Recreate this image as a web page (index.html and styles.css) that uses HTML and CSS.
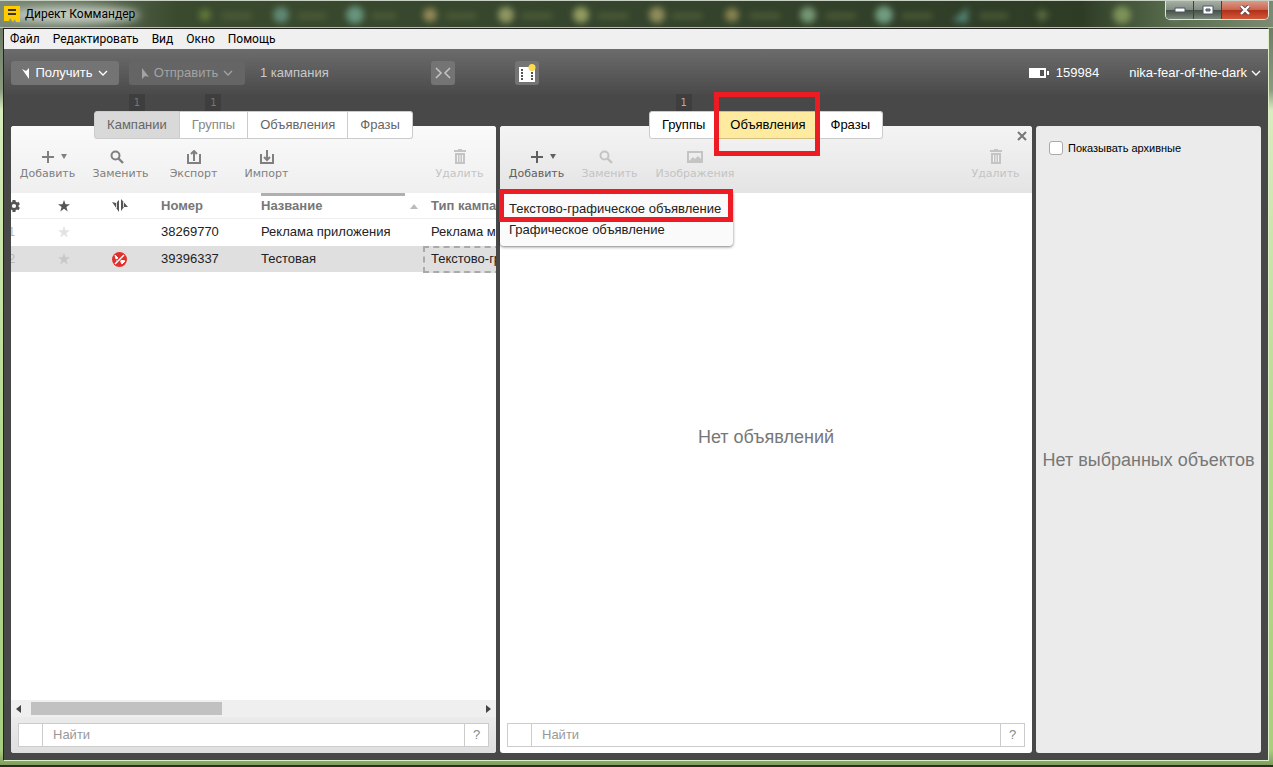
FILE: index.html
```
<!DOCTYPE html>
<html lang="ru">
  <head>
    <meta charset="UTF-8" />
    <meta name="viewport" content="width=device-width, initial-scale=1.0" />
    <title>Директ Коммандер</title>
    <link rel="stylesheet" href="styles.css">
  </head>
  <body>
    <!-- shared icons -->
    <svg class="sprite" aria-hidden="true">
      <symbol id="plus" viewBox="0 0 14 14"><path d="M7 1v12M1 7h12" fill="none" stroke="currentColor" stroke-width="2" /></symbol>
      <symbol id="search" viewBox="0 0 14 14"><circle cx="5.500" cy="5.500" r="4" fill="none" stroke="currentColor" stroke-width="2" /><path d="M8.500 8.500l4.500 4.500" stroke="currentColor" stroke-width="2.400" /></symbol>
      <symbol id="trash" viewBox="0 0 12 15"><path d="M0 1h4V0h4v1h4v2H0zM1 4h10v11H1z" fill="currentColor" /><path d="M3.500 6v7M6 6v7M8.500 6v7" stroke="#f4f4f4" /></symbol>
      <symbol id="star" viewBox="0 0 12 12"><path d="M6 0l1.500 4.200H12L8.400 6.900 9.700 11.500 6 8.800 2.300 11.500 3.600 6.900 0 4.200h4.500z" fill="currentColor" /></symbol>
      <symbol id="chevron" viewBox="0 0 10 6"><path d="M1 1l4 4 4-4" fill="none" stroke="currentColor" stroke-width="1.300" /></symbol>
    </svg>

    <div class="window">
      <header class="titlebar">
        <svg class="glass" width="1273" height="28" aria-hidden="true">
          <defs>
            <filter id="soft" x="-50%" y="-50%" width="200%" height="200%"><feGaussianBlur stdDeviation="3" /></filter>
            <filter id="haze" x="-50%" y="-100%" width="200%" height="300%"><feGaussianBlur stdDeviation="5" /></filter>
          </defs>
          <ellipse cx="74" cy="14" rx="66" ry="9" fill="#c3cbc1" filter="url(#haze)" />
          <g filter="url(#soft)" opacity="0.9">
            <circle cx="205" cy="14" r="6" fill="#647e3e" />
            <circle cx="281" cy="14" r="8" fill="#658f7c" />
            <circle cx="355" cy="14" r="9" fill="#6d9c86" />
            <circle cx="430" cy="14" r="7" fill="#9d915b" />
            <circle cx="506" cy="14" r="8" fill="#9aa167" />
            <circle cx="581" cy="14" r="8" fill="#9da666" />
            <circle cx="657" cy="14" r="8" fill="#9a9560" />
            <circle cx="732" cy="14" r="7" fill="#928a54" />
            <circle cx="808" cy="14" r="8" fill="#7ea17c" />
            <circle cx="884" cy="14" r="9" fill="#78a68a" />
            <path d="M952 20l16-14v16z" fill="#56887b" />
            <path d="M1042 8v13M1036 14h13" stroke="#71834e" stroke-width="3" />
            <circle cx="1122" cy="14" r="9" fill="#839a5c" />
            <circle cx="1175" cy="12" r="6" fill="#7da29a" />
            <path d="M222 15h30M298 15h28M372 15h24M446 15h30M522 15h30M598 15h30M672 15h30M750 15h30M826 15h30M902 15h30M980 15h28" stroke="#53633a" stroke-width="5" />
          </g>
        </svg>
        <svg class="logo" width="16" height="16" viewBox="0 0 16 16" aria-hidden="true">
          <path d="M0 0h16v16h-4l-1-3-2 3-3-4-1 3H0z" fill="#fc0" />
          <path d="M4 4h8M4 8h8" stroke="#3a3316" stroke-width="2" />
        </svg>
        <h1>Директ Коммандер</h1>
        <div class="controls">
          <button type="button" aria-label="Свернуть"><svg width="12" height="6"><path d="M1 1h10v4H1z" fill="#fff" stroke="#4c5566" /></svg></button>
          <button type="button" aria-label="Развернуть"><svg width="12" height="10"><path d="M1 1h10v8H1z" fill="#fff" stroke="#4c5566" /><path d="M4 4h4v2H4z" fill="#828a87" stroke="#4c5566" /></svg></button>
          <button type="button" class="close" aria-label="Закрыть"><svg width="12" height="10"><path d="M2 1l8 8M10 1l-8 8" stroke="#5b4750" stroke-width="4" /><path d="M2 1l8 8M10 1l-8 8" stroke="#fff" stroke-width="2.400" /></svg></button>
        </div>
      </header>

      <div class="app">
        <nav class="menubar">
          <a href="#">Файл</a>
          <a href="#">Редактировать</a>
          <a href="#">Вид</a>
          <a href="#">Окно</a>
          <a href="#">Помощь</a>
        </nav>

        <div class="workspace">
          <div class="topbar">
            <div class="sync">
              <button type="button" class="btn get">
                <svg width="8" height="11"><path d="M0 1l4 2 3-3v11z" fill="currentColor" /></svg>
                Получить
                <svg width="10" height="6"><use href="#chevron" /></svg>
              </button>
              <button type="button" class="btn send" disabled>
                <svg width="8" height="11"><path d="M1 0l7 9-4-1-3 3z" fill="currentColor" /></svg>
                Отправить
                <svg width="10" height="6"><use href="#chevron" /></svg>
              </button>
              <span class="count">1 кампания</span>
              <button type="button" class="btn square collapse" aria-label="Свернуть панели">
                <svg width="16" height="12"><path d="M1 1l5 5-5 5M15 1l-5 5 5 5" fill="none" stroke="#c4c4c4" stroke-width="1.500" /></svg>
              </button>
            </div>
            <div class="account">
              <button type="button" class="btn square" aria-label="Видео">
                <svg width="18" height="18"><path d="M1 3h16v15H1z" fill="#fff" /><path d="M4 5v12M14 5v12" stroke="#555" stroke-width="2" stroke-dasharray="2 1" /><circle cx="14" cy="3.500" r="3.500" fill="#ffdb4d" /></svg>
              </button>
              <span class="points">
                <svg width="20" height="10"><path d="M0 0h17v10H0zM18 3h2v4h-2z" fill="#fff" /><path d="M11 2h4v6h-4z" fill="#555" /></svg>
                159984
              </span>
              <button type="button" class="user">nika-fear-of-the-dark <svg width="10" height="6"><use href="#chevron" /></svg></button>
            </div>
          </div>

          <main class="panels">
            <section class="panel campaigns">
              <div class="panel-head">
                <div class="tabs">
                  <button type="button" class="tab current">Кампании<span class="badge">1</span></button>
                  <button type="button" class="tab dim">Группы<span class="badge">1</span></button>
                  <button type="button" class="tab">Объявления</button>
                  <button type="button" class="tab">Фразы</button>
                </div>
                <div class="tools">
                  <button type="button" class="tool"><span class="icon"><svg width="14" height="14"><use href="#plus" /></svg><i class="caret"></i></span>Добавить</button>
                  <button type="button" class="tool replace"><span class="icon"><svg width="14" height="14"><use href="#search" /></svg></span>Заменить</button>
                  <button type="button" class="tool"><span class="icon"><svg width="14" height="14"><path d="M1 4v9h12V4M7 11V2M4 4l3-3 3 3" fill="none" stroke="currentColor" stroke-width="2" /></svg></span>Экспорт</button>
                  <button type="button" class="tool"><span class="icon"><svg width="14" height="14"><path d="M1 4v9h12V4M7 0v9M4 7l3 3 3-3" fill="none" stroke="currentColor" stroke-width="2" /></svg></span>Импорт</button>
                  <button type="button" class="tool remove" disabled><span class="icon"><svg width="12" height="15"><use href="#trash" /></svg></span>Удалить</button>
                </div>
              </div>

              <div class="grid-view">
                <table>
                  <colgroup>
                    <col class="col-num"><col class="col-star"><col class="col-state"><col class="col-id"><col class="col-name"><col class="col-type">
                  </colgroup>
                  <thead>
                    <tr>
                      <th class="num"><svg width="12" height="12" viewBox="-6 -6 12 12" role="img" aria-label="Настройки"><circle r="3.400" fill="none" stroke="currentColor" stroke-width="2.600" /><path d="M0-6v2M0 6v-2M-5.200-3l1.700 1M5.200 3l-1.700-1M-5.200 3l1.700-1M5.200-3l-1.700 1" stroke="currentColor" stroke-width="3" /></svg></th>
                      <th class="mark"><svg width="12" height="12" role="img" aria-label="Избранное"><use href="#star" /></svg></th>
                      <th class="mark"><svg width="16" height="13" role="img" aria-label="Статус"><path d="M0 3l4 1 3-3v12zM9 0l7 8h-4l-3 4z" fill="currentColor" /><path d="M4.500 3v6M11.500 3v5" stroke="#fff" stroke-width="0.800" /></svg></th>
                      <th>Номер</th>
                      <th class="sorted">Название</th>
                      <th>Тип кампании</th>
                    </tr>
                  </thead>
                  <tbody>
                    <tr>
                      <td class="num">1</td>
                      <td class="mark"><svg width="12" height="12"><use href="#star" /></svg></td>
                      <td class="mark"></td>
                      <td>38269770</td>
                      <td>Реклама приложения</td>
                      <td>Реклама мобильных приложений</td>
                    </tr>
                    <tr class="selected">
                      <td class="num">2</td>
                      <td class="mark"><svg width="12" height="12"><use href="#star" /></svg></td>
                      <td class="mark"><svg width="15" height="15"><circle cx="7.500" cy="7.500" r="7.500" fill="#e0312d" /><path d="M3 3l3 3-2 1zM8 8l5 1-3 3zM5 8l-1 3M11 4l-3 2" fill="#fff" stroke="#fff" /><path d="M12 2L3 13" stroke="#e0312d" stroke-width="3" /><path d="M12 3L3 12" stroke="#fff" stroke-width="1.500" /></svg></td>
                      <td>39396337</td>
                      <td>Тестовая</td>
                      <td class="focused">Текстово-графические объявления</td>
                    </tr>
                  </tbody>
                </table>
              </div>

              <div class="scrollbar">
                <i class="arrow left"></i>
                <div class="track"><div class="thumb"></div></div>
                <i class="arrow right"></i>
              </div>
              <form class="find">
                <span class="find-box"></span>
                <input type="text" placeholder="Найти" aria-label="Найти кампанию">
                <button type="button" aria-label="Справка">?</button>
              </form>
            </section>

            <section class="panel ads">
              <button type="button" class="panel-close" aria-label="Закрыть панель"><svg width="10" height="10"><path d="M1 1l8 8M9 1L1 9" stroke="#777" stroke-width="2" /></svg></button>
              <div class="panel-head">
                <div class="tabs">
                  <button type="button" class="tab">Группы<span class="badge">1</span></button>
                  <button type="button" class="tab active">Объявления<span class="frame"></span></button>
                  <button type="button" class="tab">Фразы</button>
                </div>
                <div class="tools">
                  <button type="button" class="tool open"><span class="icon"><svg width="14" height="14"><use href="#plus" /></svg><i class="caret"></i></span>Добавить</button>
                  <button type="button" class="tool replace" disabled><span class="icon"><svg width="14" height="14"><use href="#search" /></svg></span>Заменить</button>
                  <button type="button" class="tool wide" disabled><span class="icon"><svg width="16" height="12"><path d="M1 1h14v10H1z" fill="none" stroke="currentColor" stroke-width="2" /><path d="M2 10l4-4 2 2 3-3 3 3v2z" fill="currentColor" /></svg></span>Изображения</button>
                  <button type="button" class="tool remove" disabled><span class="icon"><svg width="12" height="15"><use href="#trash" /></svg></span>Удалить</button>
                </div>
                <div class="dropdown">
                  <button type="button">Текстово-графическое объявление<span class="frame"></span></button>
                  <button type="button">Графическое объявление</button>
                </div>
              </div>
              <p class="empty">Нет объявлений</p>
              <form class="find">
                <span class="find-box"></span>
                <input type="text" placeholder="Найти" aria-label="Найти объявление">
                <button type="button" aria-label="Справка">?</button>
              </form>
            </section>

            <aside class="panel details">
              <label class="archive" for="archived"><input type="checkbox" id="archived"> Показывать архивные</label>
              <p class="empty">Нет выбранных объектов</p>
            </aside>
          </main>
        </div>
      </div>
    </div>
  </body>
</html>
```
FILE: styles.css
```
* {
  box-sizing: border-box;
}

body {
  margin: 0;
  font-family: "Liberation Sans", Arial, sans-serif;
  font-size: 13px;
  line-height: 16px;
  color: #222;
}

button {
  margin: 0;
  padding: 0;
  border: none;
  background: none;
  font: inherit;
  color: inherit;
}

svg {
  display: block;
  flex: none;
}

.sprite {
  position: absolute;
  width: 0;
  height: 0;
}

/* window frame */
.window {
  display: flex;
  flex-direction: column;
  min-height: 100vh;
  padding: 0 4px 4px 3px;
  background: linear-gradient(#6d7c68 28px, #8b9b80 90px, #d7edbd 110px, #b5d98e 60%, #a8cf80 98%, #7f9d5e);
  border-bottom: 2px solid #26301c;
}

.titlebar {
  position: relative;
  display: flex;
  align-items: center;
  height: 28px;
  margin: 0 -4px 0 -3px;
  padding-left: 4px;
  border-top: 1px solid #c8d0c4;
  border-bottom: 1px solid #b5bfae;
  background: linear-gradient(90deg, #7c8a77, #3a4a2e 14%, #35452d 50%, #2e3c26 85%, #586c4d 92%, #7b8b72);
  overflow: hidden;
}

.glass {
  position: absolute;
  left: 0;
  top: 0;
}

.logo,
.titlebar h1 {
  position: relative;
}

.titlebar h1 {
  margin: 0 0 0 5px;
  font: 12px/16px Roboto, sans-serif;
  color: #000;
}

.controls {
  position: relative;
  display: flex;
  align-self: flex-start;
  margin-left: auto;
  margin-right: 4px;
  border: 1px solid #dfe4dd;
  border-top: none;
  border-radius: 0 0 5px 5px;
  overflow: hidden;
}

.controls button {
  display: flex;
  align-items: center;
  justify-content: center;
  width: 28px;
  height: 18px;
  border-right: 1px solid #3c433b;
  background: linear-gradient(#a7afa6, #828d82 48%, #465047 52%, #7b887a);
}

.controls .close {
  width: 46px;
  border: none;
  background: linear-gradient(#dc9a88, #c86650 48%, #b23018 52%, #d0583a);
}

.app {
  display: flex;
  flex-direction: column;
  flex: 1;
  border: 1px solid #222;
  border-right-color: #dcefc6;
  border-bottom-color: #dcefc6;
}

.menubar {
  display: flex;
  gap: 13px;
  height: 20px;
  padding-left: 6px;
  background: #f0f0f0;
  font: 12px/20px Roboto, sans-serif;
}

.menubar a {
  color: #000;
  text-decoration: none;
}

.workspace {
  display: flex;
  flex-direction: column;
  flex: 1;
  padding: 12px 7px 7px;
  background: #484848 linear-gradient(#6c6c6c, #484848) no-repeat top / 100% 48px;
}

.topbar,
.panels {
  display: grid;
  grid-template-columns: minmax(0, 485fr) minmax(0, 532fr) 225px;
  gap: 4px;
}

.topbar {
  height: 65px;
  align-items: start;
  color: #fff;
}

.sync,
.account,
.points,
.btn,
.user {
  display: flex;
  align-items: center;
}

.account {
  grid-column: 2 / 4;
  padding-left: 15px;
}

.btn {
  justify-content: center;
  gap: 5px;
  height: 24px;
  border-radius: 3px;
  background: #747474;
}

.get {
  width: 108px;
}

.send {
  width: 116px;
  margin-left: 10px;
  background: #656565;
  color: #a3a3a3;
}

.count {
  margin-left: 15px;
  color: #c9c9c9;
}

.square {
  width: 24px;
}

.collapse {
  margin-left: auto;
  margin-right: 41px;
}

.points {
  gap: 7px;
  margin-left: auto;
}

.user {
  gap: 4px;
  margin-left: 30px;
}

/* panels */
.panels {
  flex: 1;
}

.panel {
  position: relative;
  display: flex;
  flex-direction: column;
  min-width: 0;
  border-radius: 3px;
  background: #fff;
}

.panel-head {
  position: relative;
  height: 67px;
  border-radius: 3px 3px 0 0;
  background: linear-gradient(#fafafa, #efefef);
}

.ads .panel-head {
  background: linear-gradient(#f4f4f4, #e4e4e4);
}

.tabs {
  display: flex;
  justify-content: center;
  height: 28px;
  margin-top: -15px;
}

.panel-head::before {
  content: "";
  display: table;
}

.tab {
  position: relative;
  padding: 0 12px;
  border: 1px solid #ccc;
  border-left-width: 0;
  background: #fff;
  color: #666;
}

.tab:first-child {
  border-left-width: 1px;
  border-radius: 3px 0 0 3px;
}

.tab:last-child {
  border-radius: 0 3px 3px 0;
}

.ads .tab {
  color: #000;
}

.tab.current {
  background: #d9d9d9;
}

.tab.dim {
  color: #888;
}

.tab.active {
  border-color: #d2bf80;
  background: #ffeba0;
}

.badge {
  position: absolute;
  left: 50%;
  bottom: 100%;
  width: 16px;
  margin: 0 0 1px -8px;
  background: #3e3e3e;
  font: 10px/17px "DejaVu Sans", sans-serif;
  color: #777;
}

.ads .badge {
  color: #c0a79c;
}

/* highlight frames */
.frame {
  position: absolute;
  inset: -20px -2px -18px -4px;
  border: 5px solid #ed1c24;
  z-index: 2;
}

.tools {
  display: flex;
  padding-top: 9px;
}

.tool {
  width: 73px;
  font: 11px/18px "DejaVu Sans", sans-serif;
  color: #808080;
}

.tool.open {
  color: #606060;
}

.tool:disabled {
  color: #c4c4c4;
}

.tool.wide {
  width: 98px;
}

.tool.remove {
  margin-left: auto;
}

.tool .icon {
  position: relative;
  display: flex;
  align-items: center;
  justify-content: center;
  height: 17px;
}

.replace .icon {
  padding-right: 8px;
}

.caret {
  position: absolute;
  left: 50px;
  top: 6px;
  border: 3px solid transparent;
  border-top: 5px solid currentColor;
  border-bottom: none;
}

.panel-close {
  position: absolute;
  top: 5px;
  right: 5px;
  z-index: 1;
}

.dropdown {
  position: absolute;
  left: 0;
  top: 66px;
  width: 233px;
  padding: 6px 0;
  border-radius: 0 0 4px 4px;
  background: #fafafa;
  box-shadow: 0 1px 3px rgba(0, 0, 0, 0.5);
}

.dropdown button {
  position: relative;
  display: block;
  width: 100%;
  padding-left: 9px;
  line-height: 21px;
  text-align: left;
}

.dropdown .frame {
  inset: -9px 0 -3px -1px;
}

/* campaign list */
.grid-view {
  flex: 1;
  overflow: hidden;
}

table {
  width: 570px;
  margin-left: -8px;
  border-collapse: separate;
  border-spacing: 0;
  table-layout: fixed;
}

.col-num {
  width: 37px;
}

.col-star {
  width: 47px;
}

.col-state {
  width: 65px;
}

.col-id {
  width: 101px;
}

.col-name {
  width: 170px;
}

.col-type {
  width: 150px;
}

th,
td {
  height: 27px;
  padding: 0 0 0 8px;
  border-bottom: 1px solid #fff;
  text-align: left;
  white-space: nowrap;
  overflow: hidden;
}

th:nth-child(4),
td:nth-child(4) {
  padding-left: 9px;
}

th {
  height: 26px;
  border-color: #eee;
  color: #777;
}

.num {
  padding-left: 5px;
  color: #bbb;
}

.mark {
  padding: 0;
}

.mark svg {
  margin: 0 auto;
}

th svg {
  color: #555;
}

td svg {
  color: #e3e3e3;
}

.sorted {
  position: relative;
}

.sorted::before {
  content: "";
  position: absolute;
  left: 8px;
  top: 0;
  width: 144px;
  height: 3px;
  background: #b0b0b0;
}

.sorted::after {
  content: "";
  position: absolute;
  right: 5px;
  top: 11px;
  border: 4px solid transparent;
  border-top: none;
  border-bottom: 5px solid #bbb;
}

.selected td {
  background: #dfdfdf;
}

.selected td svg {
  color: #c8c8c8;
}

.selected .focused {
  padding: 0 0 1px 6px;
  border: 2px dashed #aaa;
}

.scrollbar {
  display: flex;
  align-items: center;
  height: 17px;
  padding: 0 5px;
  background: #efefef;
}

.track {
  flex: 1;
  margin: 0 10px;
}

.thumb {
  width: 43%;
  height: 13px;
  background: #c1c1c1;
}

.arrow {
  border: 4px solid transparent;
}

.arrow.left {
  border-left: none;
  border-right: 5px solid #444;
}

.arrow.right {
  border-right: none;
  border-left: 5px solid #444;
}

.find {
  display: flex;
  height: 36px;
  padding: 6px 7px;
  border-radius: 0 0 3px 3px;
}

.campaigns .find {
  background: linear-gradient(#ebebeb, #dfdfdf);
}

.find > * {
  border: 1px solid #ccc;
  background: #fff;
}

.find-box,
.find button {
  width: 25px;
  color: #888;
}

.find input {
  flex: 1;
  min-width: 0;
  padding: 0 10px;
  border-width: 1px 0;
  border-radius: 0;
  font: inherit;
}

.find input::placeholder {
  color: #999;
}

.empty {
  margin: auto;
  font-size: 18px;
  line-height: 22px;
  color: #777;
  white-space: nowrap;
}

.ads .empty {
  padding-bottom: 36px;
}

/* details */
.details {
  background: #ebebeb;
}

.archive {
  display: flex;
  align-items: center;
  gap: 5px;
  height: 40px;
  padding: 3px 0 0 13px;
  font-size: 11px;
  color: #000;
}

.archive input {
  appearance: none;
  width: 14px;
  height: 14px;
  margin: 0;
  border: 1px solid #aaa;
  border-radius: 3px;
  background: #fff;
}
```
